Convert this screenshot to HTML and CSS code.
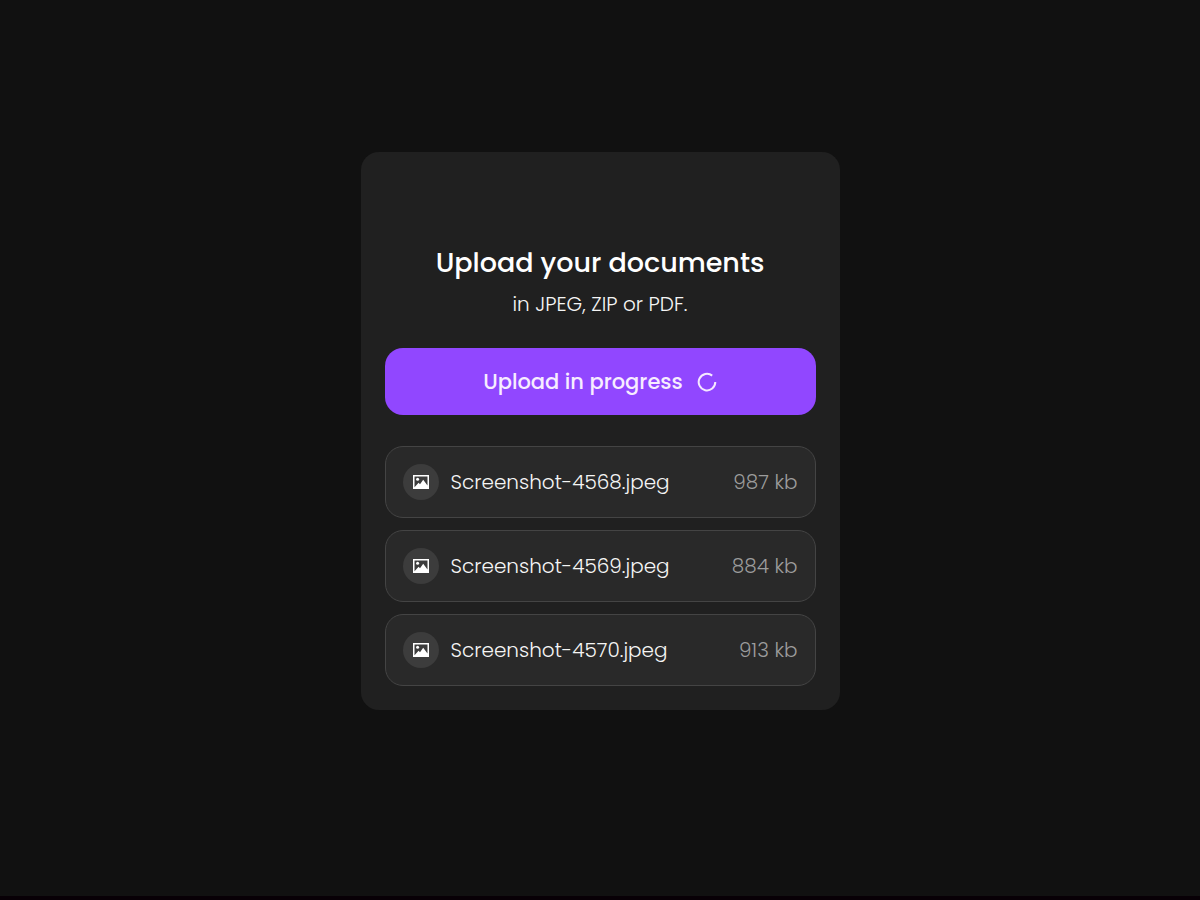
FILE: index.html
```html
<!DOCTYPE html>
<html lang="en">
<head>
<meta charset="utf-8">
<meta name="viewport" content="width=device-width, initial-scale=1">
<title>Upload your documents</title>
<link rel="stylesheet" href="styles.css">
</head>
<body>
<svg class="sprite" aria-hidden="true">
  <symbol id="image" viewBox="0 0 16 14">
    <path fill="#fff" fill-rule="evenodd" d="M0 0h16v14H0zM1.5 1.5v10.7L5.6 7.8l1.4 1.4L10.2 4.8l4.3 5.8V1.5z"/>
    <circle cx="4.6" cy="4.3" r="1.5" fill="#fff"/>
  </symbol>
</svg>
<main class="page">
  <section class="card">
    <h1 class="title">Upload your documents</h1>
    <p class="subtitle">in JPEG, ZIP or PDF.</p>
    <button class="upload" type="button">
      <span>Upload in progress</span>
      <svg class="spinner" viewBox="0 0 20 20" aria-hidden="true"><path d="M15.2 3.6A8.3 8.3 0 1 0 18.3 10" fill="none" stroke="#f5e9ff" stroke-width="2"/></svg>
    </button>
    <ul class="files">
      <li class="file"><span class="badge"><svg class="icon" aria-hidden="true"><use href="#image"/></svg></span><span class="name">Screenshot-4568.jpeg</span><span class="size">987 kb</span></li>
      <li class="file"><span class="badge"><svg class="icon" aria-hidden="true"><use href="#image"/></svg></span><span class="name">Screenshot-4569.jpeg</span><span class="size">884 kb</span></li>
      <li class="file"><span class="badge"><svg class="icon" aria-hidden="true"><use href="#image"/></svg></span><span class="name">Screenshot-4570.jpeg</span><span class="size">913 kb</span></li>
    </ul>
  </section>
</main>
</body>
</html>
```
FILE: styles.css
```css
* { box-sizing: border-box; }
body {
  margin: 0;
  background: #111;
  color: #fff;
  font-family: Poppins, Inter, "Liberation Sans", sans-serif;
}
.sprite { position: absolute; width: 0; height: 0; }
.page {
  min-height: 100vh;
  display: flex;
  align-items: center;
  justify-content: center;
  padding: 16px 16px 50px;
  border-bottom: 4px solid #080006;
}
.card {
  width: 100%;
  max-width: 479px;
  padding: 90px 24px 24px;
  border-radius: 18px;
  background: #202020;
}
.title {
  margin: 0;
  font-size: 27px;
  line-height: 42px;
  font-weight: 500;
  text-align: center;
}
.subtitle {
  margin: 5px 0 29px;
  font-size: 20px;
  line-height: 30px;
  font-weight: 300;
  text-align: center;
  color: #f5f5f5;
}
.upload {
  display: flex;
  align-items: center;
  justify-content: center;
  gap: 14px;
  width: 100%;
  padding: 17px;
  border: 0;
  border-radius: 18px;
  background: #9147ff;
  color: #f7edff;
  font: inherit;
  font-size: 21px;
  line-height: 33px;
  font-weight: 500;
}
.spinner { width: 20px; height: 20px; }
.files {
  display: grid;
  gap: 12px;
  margin: 31px 0 0;
  padding: 0;
  list-style: none;
}
.file {
  display: flex;
  align-items: center;
  gap: 12px;
  padding: 17px;
  border: 1px solid #444;
  border-radius: 18px;
  background: #292929;
  font-size: 20px;
  line-height: 30px;
  font-weight: 300;
}
.badge {
  display: grid;
  place-items: center;
  width: 36px;
  height: 36px;
  border-radius: 50%;
  background: #3c3c3c;
}
.icon { width: 16px; height: 14px; }
.name { flex: 1; color: #f5f5f5; }
.size { color: #9c9c9c; }
```
